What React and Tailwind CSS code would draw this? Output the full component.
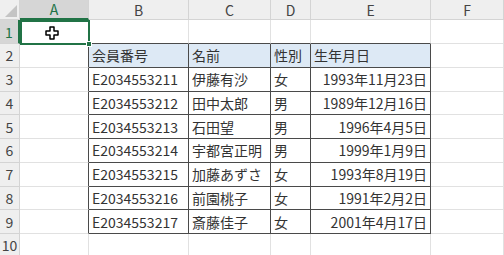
import React from "react";

const cols = ["A", "B", "C", "D", "E", "F"];

const data = [
  ["会員番号", "名前", "性別", "生年月日"],
  ["E2034553211", "伊藤有沙", "女", "1993年11月23日"],
  ["E2034553212", "田中太郎", "男", "1989年12月16日"],
  ["E2034553213", "石田望", "男", "1996年4月5日"],
  ["E2034553214", "宇都宮正明", "男", "1999年1月9日"],
  ["E2034553215", "加藤あずさ", "女", "1993年8月19日"],
  ["E2034553216", "前園桃子", "女", "1991年2月2日"],
  ["E2034553217", "斎藤佳子", "女", "2001年4月17日"],
];

function Cell({ r, c }) {
  const inRows = r >= 2 && r <= 9;
  const inCols = c >= 1 && c <= 4;
  const rightDark = inRows && c <= 4;
  const bottomDark = r >= 1 && r <= 9 && inCols;
  const row = inRows && inCols ? data[r - 2] : null;
  const text = row ? row[c - 1] : "";
  const header = r === 2 && inCols;
  const right = c === 4 && r > 2;

  return (
    <div
      className={
        "flex items-center overflow-hidden whitespace-nowrap border-r border-b px-[3px] text-[14px] leading-none text-[#333] " +
        (rightDark ? "border-r-[#4a4a4a] " : "border-r-[#e1e1e1] ") +
        (bottomDark ? "border-b-[#4a4a4a] " : "border-b-[#e1e1e1] ") +
        (header ? "bg-[#dde9f5] " : "bg-white ") +
        (right ? "justify-end" : "justify-start")
      }
    >
      {text}
    </div>
  );
}

export default function App() {
  const rows = Array.from({ length: 10 }, (_, i) => i + 1);

  return (
    <div
      className="relative h-[255px] w-[504px] overflow-hidden bg-white"
      style={{ fontFamily: '"Noto Sans CJK JP", "Noto Sans", sans-serif' }}
    >
      <div className="grid grid-cols-[20px_69px_100px_82px_40px_120px_1fr] grid-rows-[20px_24px_repeat(9,23.75px)]">
        {/* corner */}
        <div className="relative border-r border-b border-[#d4d4d4] bg-[#efefef]">
          <div className="absolute right-[2px] bottom-[2px] h-0 w-0 border-b-[12px] border-l-[12px] border-b-[#c4c4c4] border-l-transparent" />
        </div>
        {cols.map((col, i) => (
          <div
            key={col}
            className={
              "flex items-center justify-center border-r text-[14px] leading-none " +
              (i === 0
                ? "border-r-[#d4d4d4] border-b-2 border-b-[#217346] bg-[#d6d6d6] text-[#217346]"
                : "border-r-[#d4d4d4] border-b border-b-[#d4d4d4] bg-[#efefef] text-[#444]")
            }
          >
            {col}
          </div>
        ))}

        {rows.map((r) => (
          <React.Fragment key={r}>
            <div
              className={
                "flex items-center justify-center border-b text-[14px] leading-none " +
                (r === 1
                  ? "border-r-2 border-r-[#217346] border-b-[#d4d4d4] bg-[#d6d6d6] text-[#217346]"
                  : "border-r border-r-[#d4d4d4] border-b-[#d4d4d4] bg-[#efefef] text-[#444]")
              }
            >
              {r}
            </div>
            {cols.map((col, c) => (
              <Cell key={col} r={r} c={c} />
            ))}
          </React.Fragment>
        ))}
      </div>

      {/* selected cell A1 */}
      <div className="absolute top-[20px] left-[20px] h-[25px] w-[70px] border-2 border-[#217346]" />
      <div className="absolute top-[41px] left-[86px] h-[6px] w-[6px] border border-white bg-[#217346]" />

      {/* cursor */}
      <svg className="absolute top-[26px] left-[45px]" width="14" height="14" viewBox="0 0 14 14">
        <path
          d="M5 1h4v4h4v4H9v4H5V9H1V5h4z"
          fill="white"
          stroke="black"
          strokeWidth="1.5"
          strokeLinejoin="round"
        />
      </svg>
    </div>
  );
}
